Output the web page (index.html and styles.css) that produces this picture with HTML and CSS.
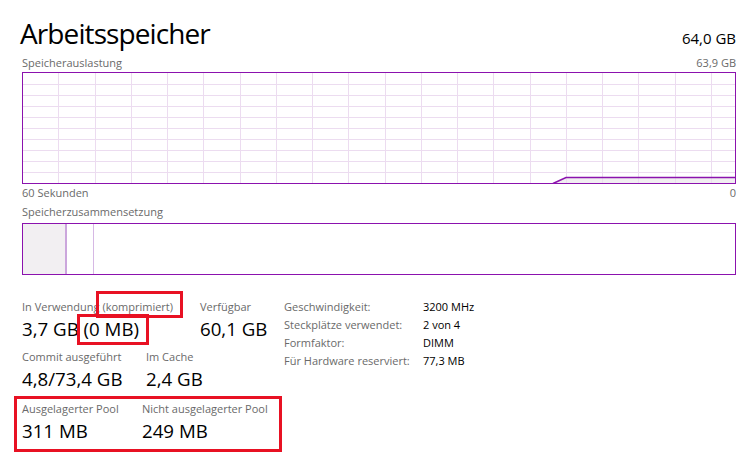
FILE: index.html
```html
<!DOCTYPE html>
<html lang="de">
<head>
<meta charset="utf-8">
<title>Arbeitsspeicher</title>
<link rel="stylesheet" href="styles.css">
</head>
<body>
<div class="page">
  <div class="head">
    <h1 class="title">Arbeitsspeicher</h1>
    <span class="total">64,0 GB</span>
  </div>
  <div class="caption caption--top"><span>Speicherauslastung</span><span>63,9 GB</span></div>
  <div class="graph">
    <svg class="graph-svg" width="712" height="110" viewBox="0 0 712 110" shape-rendering="crispEdges">
      <polygon points="532,110 543,104 712,104 712,110" fill="#f1eef1"/>
      <g stroke="#ecdcf0" stroke-width="1">
        <line x1="35.5" y1="0" x2="35.5" y2="110"/>
        <line x1="72.5" y1="0" x2="72.5" y2="110"/>
        <line x1="108.5" y1="0" x2="108.5" y2="110"/>
        <line x1="144.5" y1="0" x2="144.5" y2="110"/>
        <line x1="180.5" y1="0" x2="180.5" y2="110"/>
        <line x1="217.5" y1="0" x2="217.5" y2="110"/>
        <line x1="253.5" y1="0" x2="253.5" y2="110"/>
        <line x1="289.5" y1="0" x2="289.5" y2="110"/>
        <line x1="325.5" y1="0" x2="325.5" y2="110"/>
        <line x1="362.5" y1="0" x2="362.5" y2="110"/>
        <line x1="398.5" y1="0" x2="398.5" y2="110"/>
        <line x1="434.5" y1="0" x2="434.5" y2="110"/>
        <line x1="470.5" y1="0" x2="470.5" y2="110"/>
        <line x1="507.5" y1="0" x2="507.5" y2="110"/>
        <line x1="543.5" y1="0" x2="543.5" y2="110"/>
        <line x1="579.5" y1="0" x2="579.5" y2="110"/>
        <line x1="615.5" y1="0" x2="615.5" y2="110"/>
        <line x1="652.5" y1="0" x2="652.5" y2="110"/>
        <line x1="688.5" y1="0" x2="688.5" y2="110"/>
        <line x1="0" y1="11.5" x2="712" y2="11.5"/>
        <line x1="0" y1="22.5" x2="712" y2="22.5"/>
        <line x1="0" y1="33.5" x2="712" y2="33.5"/>
        <line x1="0" y1="44.5" x2="712" y2="44.5"/>
        <line x1="0" y1="55.5" x2="712" y2="55.5"/>
        <line x1="0" y1="66.5" x2="712" y2="66.5"/>
        <line x1="0" y1="77.5" x2="712" y2="77.5"/>
        <line x1="0" y1="88.5" x2="712" y2="88.5"/>
        <line x1="0" y1="99.5" x2="712" y2="99.5"/>
      </g>
      <polyline points="530,110.5 543,104.5 712,104.5" fill="none" stroke="#8b12ae" stroke-width="1.6" shape-rendering="auto"/>
    </svg>
  </div>
  <div class="caption"><span>60 Sekunden</span><span>0</span></div>
  <div class="caption caption--comp"><span>Speicherzusammensetzung</span></div>
  <div class="comp">
    <div class="comp-used"></div>
    <div class="comp-mod"></div>
  </div>
  <div class="details">
    <div class="stats">
      <div class="stat-row">
        <div class="stat stat--w178">
          <div class="stat-label">In Verwendung (komprimiert)</div>
          <div class="stat-value">3,7 GB (0 MB)</div>
        </div>
        <div class="stat">
          <div class="stat-label">Verfügbar</div>
          <div class="stat-value">60,1 GB</div>
        </div>
      </div>
      <div class="stat-row stat-row--2">
        <div class="stat stat--w124">
          <div class="stat-label">Commit ausgeführt</div>
          <div class="stat-value">4,8/73,4 GB</div>
        </div>
        <div class="stat">
          <div class="stat-label">Im Cache</div>
          <div class="stat-value">2,4 GB</div>
        </div>
      </div>
      <div class="stat-row stat-row--3">
        <div class="stat stat--w120">
          <div class="stat-label">Ausgelagerter Pool</div>
          <div class="stat-value">311 MB</div>
        </div>
        <div class="stat">
          <div class="stat-label">Nicht ausgelagerter Pool</div>
          <div class="stat-value">249 MB</div>
        </div>
      </div>
    </div>
    <dl class="props">
      <dt>Geschwindigkeit:</dt><dd>3200 MHz</dd>
      <dt>Steckplätze verwendet:</dt><dd>2 von 4</dd>
      <dt>Formfaktor:</dt><dd>DIMM</dd>
      <dt>Für Hardware reserviert:</dt><dd>77,3 MB</dd>
    </dl>
  </div>
  <div class="mark mark--komp"></div>
  <div class="mark mark--mb"></div>
  <div class="mark mark--pool"></div>
</div>
</body>
</html>
```
FILE: styles.css
```css
* { box-sizing: border-box; }
html, body { margin: 0; padding: 0; background: #fff; }
body {
  font-family: "Open Sans", "Noto Sans", sans-serif;
  color: #000;
}
.page {
  position: relative;
  width: 751px;
  height: 462px;
  padding: 15px 15px 0 22px;
  overflow: hidden;
}
.head {
  display: flex;
  justify-content: space-between;
  align-items: baseline;
  height: 36px;
}
.title {
  margin: 0 0 0 -2px;
  font-size: 28px;
  line-height: 36px;
  font-weight: 400;
  letter-spacing: -0.9px;
}
.total {
  font-size: 15px;
  line-height: 20px;
}
.caption {
  display: flex;
  justify-content: space-between;
  font-size: 11px;
  line-height: 18px;
  color: #6a6a6a;
}
.caption--top { margin-top: 3px; }
.caption--comp { margin-top: 1px; }
.graph {
  border: 1px solid #8b12ae;
  height: 112px;
}
.graph-svg { display: block; }
.comp {
  margin-top: 2px;
  border: 1px solid #8b12ae;
  height: 52px;
  display: flex;
}
.comp-used {
  width: 44px;
  background: #f2eff2;
  border-right: 2px solid #cba6dc;
}
.comp-mod {
  width: 27px;
  border-right: 1px solid #d6b8e4;
}
.details {
  margin-top: 23px;
  display: flex;
  align-items: flex-start;
}
.stats { width: 262px; }
.stat-row { display: flex; }
.stat-row--2 { margin-top: 7px; }
.stat-row--3 { margin-top: 9px; }
.stat--w178 { width: 178px; }
.stat--w124 { width: 124px; }
.stat--w120 { width: 120px; }
.stat-label {
  font-size: 11px;
  line-height: 18px;
  color: #6a6a6a;
  white-space: nowrap;
}
.stat-value {
  font-size: 18.7px;
  line-height: 25px;
  white-space: nowrap;
}
.props {
  margin: 0;
  display: grid;
  grid-template-columns: 139px auto;
  grid-auto-rows: 18px;
  font-size: 11px;
  line-height: 18px;
}
.props dt { color: #6a6a6a; white-space: nowrap; }
.props dd { margin: 0; color: #000; white-space: nowrap; }
.mark {
  position: absolute;
  border: 3px solid #e81123;
}
.mark--komp { left: 96px; top: 291px; width: 87px; height: 27px; }
.mark--mb { left: 77px; top: 314px; width: 72px; height: 31px; }
.mark--pool { left: 14px; top: 396px; width: 268px; height: 56px; }
```
